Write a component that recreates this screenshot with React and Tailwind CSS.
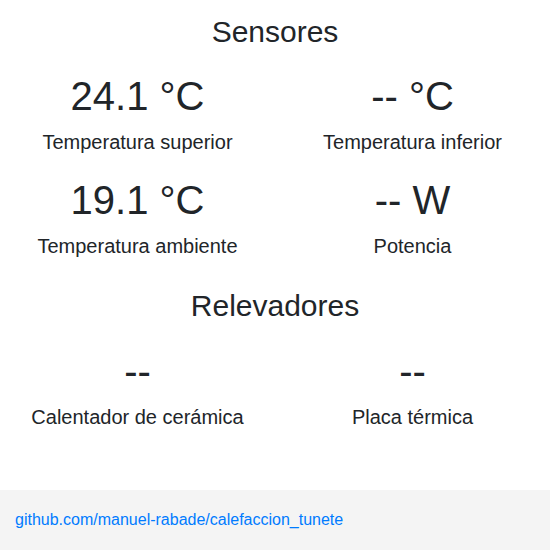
export default function App() {
    const sensores = [
        { valor: '24.1 °C', nombre: 'Temperatura superior' },
        { valor: '-- °C', nombre: 'Temperatura inferior' },
        { valor: '19.1 °C', nombre: 'Temperatura ambiente' },
        { valor: '-- W', nombre: 'Potencia' },
    ];
    const relevadores = [
        { valor: '--', nombre: 'Calentador de cerámica' },
        { valor: '--', nombre: 'Placa térmica' },
    ];

    return (
        <div className="min-h-[550px] flex flex-col bg-white text-[#212529] font-['Liberation_Sans',Arial,sans-serif]">
            <main className="flex-1 text-center">
                {/* Sensores */}
                <h2 className="text-[30px] leading-[36px] pt-[14px]">Sensores</h2>

                <div className="grid grid-cols-2 mt-[22px]">
                    {sensores.map((s) => (
                        <div key={s.nombre} className="px-[15px] pb-[22px]">
                            <h1 className="text-[40px] leading-[48px] mb-[10px]">{s.valor}</h1>
                            <h5 className="text-[20px] leading-[24px]">{s.nombre}</h5>
                        </div>
                    ))}
                </div>

                {/* Relevadores */}
                <h2 className="text-[30px] leading-[36px] mt-[8px]">Relevadores</h2>

                <div className="grid grid-cols-2 mt-[23px]">
                    {relevadores.map((r) => (
                        <div key={r.nombre} className="px-[15px]">
                            <h1 className="text-[40px] leading-[48px] mb-[10px]">{r.valor}</h1>
                            <h5 className="text-[20px] leading-[24px]">{r.nombre}</h5>
                        </div>
                    ))}
                </div>
            </main>

            <footer className="h-[60px] bg-[#f4f4f4] flex items-center px-[15px]">
                <a href="#" className="text-[#007bff] text-[16px]">github.com/manuel-rabade/calefaccion_tunete</a>
            </footer>
        </div>
    );
}
